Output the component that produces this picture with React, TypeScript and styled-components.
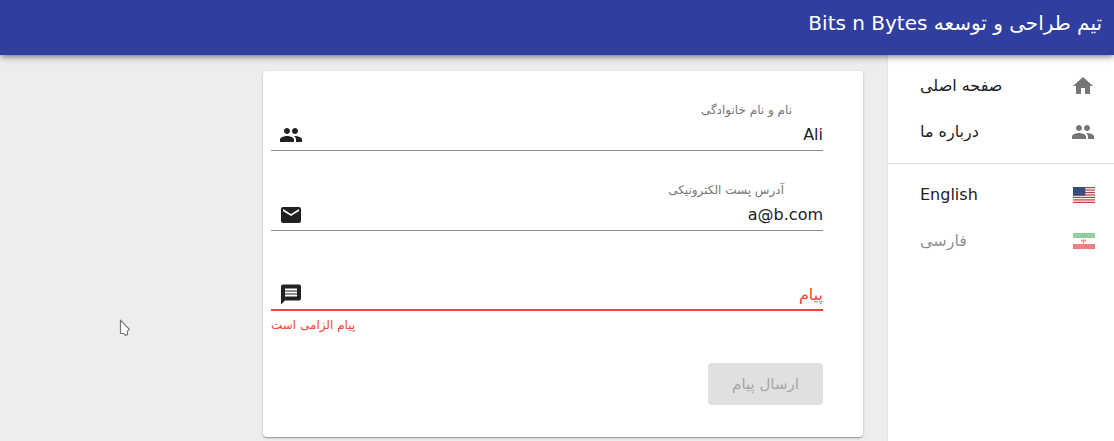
import React from 'react';
import styled, { createGlobalStyle } from 'styled-components';

const GlobalStyle = createGlobalStyle`
  * { box-sizing: border-box; }
  body {
    margin: 0;
    overflow: hidden;
    background: #ededed;
    color: #212121;
    font-family: "DejaVu Sans", sans-serif;
    font-size: 16px;
  }
`;

const Page = styled.div`
  direction: rtl;
  height: 441px;
  display: flex;
  flex-direction: column;
  overflow: hidden;
`;

const AppBar = styled.header`
  flex: none;
  height: 55px;
  padding: 11px 12px 0;
  background: #303f9f;
  color: #fff;
  z-index: 2;
  box-shadow: 0 2px 4px -1px rgba(0, 0, 0, 0.3), 0 4px 5px rgba(0, 0, 0, 0.14),
    0 1px 10px rgba(0, 0, 0, 0.12);
`;

const Title = styled.h1`
  margin: 0;
  font-size: 20px;
  font-weight: 400;
  line-height: 24px;
`;

const Body = styled.div`
  flex: 1;
  min-height: 0;
  display: flex;
`;

const Drawer = styled.nav`
  flex: none;
  width: 227px;
  padding-top: 8px;
  background: #fff;
  border-left: 1px solid #e6e6e6;
`;

const NavItem = styled.a<{ $disabled?: boolean }>`
  height: 46px;
  padding: 0 19px 0 32px;
  display: flex;
  align-items: center;
  justify-content: space-between;
  line-height: 24px;
  opacity: ${(p) => (p.$disabled ? 0.5 : 1)};
`;

const NavIcon = styled.span`
  width: 24px;
  height: 24px;
  display: flex;
  align-items: center;
  justify-content: flex-start;
  color: #757575;
`;

const Divider = styled.hr`
  height: 1px;
  margin: 8px 0;
  border: 0;
  background: #e0e0e0;
`;

const Main = styled.main`
  flex: 1;
  padding: 16px 24px 0 0;
`;

const Card = styled.form`
  width: 600px;
  height: 366px;
  padding: 24px 40px 0 8px;
  display: flex;
  flex-direction: column;
  background: #fff;
  border-radius: 4px;
  box-shadow: 0 1px 3px rgba(0, 0, 0, 0.2), 0 1px 1px rgba(0, 0, 0, 0.14),
    0 2px 1px -1px rgba(0, 0, 0, 0.12);
`;

const Field = styled.div`
  height: 80px;
`;

const Label = styled.label<{ $indent: number }>`
  display: block;
  height: 28px;
  padding-right: ${(p) => p.$indent}px;
  color: #757575;
  font-size: 12px;
  line-height: 31px;
`;

const InputRow = styled.div<{ $error?: boolean }>`
  height: 28px;
  padding-left: 8px;
  display: flex;
  align-items: flex-start;
  justify-content: space-between;
  border-bottom: ${(p) => (p.$error ? '2px solid #f44336' : '1px solid #8c8c8c')};
  color: ${(p) => (p.$error ? '#f44336' : '#212121')};
`;

const Value = styled.span`
  line-height: 24px;
`;

const FieldIcon = styled.span`
  width: 24px;
  height: 24px;
  color: #212121;
`;

const Helper = styled.p`
  margin: 0;
  padding-top: 4px;
  direction: ltr;
  color: #f44336;
  font-size: 12px;
  line-height: 20px;
`;

const Submit = styled.button`
  width: 115px;
  height: 42px;
  margin-top: 28px;
  padding: 0;
  border: 0;
  border-radius: 4px;
  background: #e0e0e0;
  color: #a6a6a6;
  font: inherit;
  font-size: 15px;
`;

const Cursor = styled.svg`
  position: absolute;
  left: 119px;
  top: 319px;
`;

const Glyph = styled.svg`
  display: block;
  width: 24px;
  height: 24px;
  fill: currentColor;
`;

const Flag = styled.svg`
  display: block;
  flex: none;
`;

const paths = {
  home: 'M10 20v-6h4v6h5v-8h3L12 3 2 12h3v8z',
  people:
    'M16 11c1.66 0 2.99-1.34 2.99-3S17.66 5 16 5c-1.66 0-3 1.34-3 3s1.34 3 3 3zm-8 0c1.66 0 2.99-1.34 2.99-3S9.66 5 8 5C6.34 5 5 6.34 5 8s1.34 3 3 3zm0 2c-2.33 0-7 1.17-7 3.5V19h14v-2.5c0-2.33-4.67-3.5-7-3.5zm8 0c-.29 0-.62.02-.97.05 1.16.84 1.97 1.97 1.97 3.45V19h6v-2.5c0-2.33-4.67-3.5-7-3.5z',
  mail: 'M20 4H4c-1.1 0-1.99.9-1.99 2L2 18c0 1.1.9 2 2 2h16c1.1 0 2-.9 2-2V6c0-1.1-.9-2-2-2zm0 4l-8 5-8-5V6l8 5 8-5v2z',
  message:
    'M20 2H4c-1.1 0-1.99.9-1.99 2L2 22l4-4h14c1.1 0 2-.9 2-2V4c0-1.1-.9-2-2-2zM6 9h12v2H6V9zm12 5H6v-2h12v2zm0-6H6V6h12v2z',
};

const Icon = ({ name }: { name: keyof typeof paths }) => (
  <Glyph viewBox={name === 'message' ? '0 0.5 24 24' : '0 0 24 24'}>
    <path d={paths[name]} />
  </Glyph>
);

const UsFlag = () => (
  <Flag width="22" height="16" viewBox="0 0 22 16">
    <path d="M0 0h22v16H0z" fill="#fff" />
    {[0, 1, 2, 3, 4, 5, 6].map((i) => (
      <rect key={i} y={i * 2.46} width="22" height="1.23" fill="#bd3d44" />
    ))}
    <path d="M0 0h12.3v8.6H0z" fill="#2f4a78" />
    {[1.5, 3.3, 5.1, 6.9].map((y) => (
      <path key={y} d={`M1 ${y}h11`} stroke="#8090ad" strokeWidth=".5" strokeDasharray=".6 1.4" />
    ))}
  </Flag>
);

const IranFlag = () => (
  <Flag width="22" height="16" viewBox="0 0 22 16">
    <path d="M0 0h22v16H0z" fill="#fff" />
    <path d="M0 0h22v5H0z" fill="#239f40" />
    <path d="M0 11h22v5H0z" fill="#da0000" />
    <path
      d="M10.5 5.7v4.8M8.7 6.6c-.7 1.6.4 2.5 1.6 2.9M12.3 6.6c.7 1.6-.4 2.5-1.6 2.9M8 7.5h5"
      fill="none"
      stroke="#da0000"
      strokeWidth=".8"
    />
  </Flag>
);

export default function App() {
  return (
    <Page>
      <GlobalStyle />
      <AppBar>
        <Title>تیم طراحی و توسعه Bits n Bytes</Title>
      </AppBar>
      <Body>
        <Drawer>
          <NavItem>
            <NavIcon><Icon name="home" /></NavIcon>
            <span>صفحه اصلی</span>
          </NavItem>
          <NavItem>
            <NavIcon><Icon name="people" /></NavIcon>
            <span>درباره ما</span>
          </NavItem>
          <Divider />
          <NavItem>
            <NavIcon><UsFlag /></NavIcon>
            <span>English</span>
          </NavItem>
          <NavItem $disabled>
            <NavIcon><IranFlag /></NavIcon>
            <span>فارسی</span>
          </NavItem>
        </Drawer>
        <Main>
          <Card>
            <Field>
              <Label $indent={31}>نام و نام خانوادگی</Label>
              <InputRow>
                <Value>Ali</Value>
                <FieldIcon><Icon name="people" /></FieldIcon>
              </InputRow>
            </Field>
            <Field>
              <Label $indent={39}>آدرس پست الکترونیکی</Label>
              <InputRow>
                <Value>a@b.com</Value>
                <FieldIcon><Icon name="mail" /></FieldIcon>
              </InputRow>
            </Field>
            <Field>
              <Label $indent={0} />
              <InputRow $error>
                <Value>پیام</Value>
                <FieldIcon><Icon name="message" /></FieldIcon>
              </InputRow>
              <Helper>پیام الزامی است</Helper>
            </Field>
            <Submit type="button" disabled>ارسال پیام</Submit>
          </Card>
        </Main>
      </Body>
      <Cursor width="12" height="18" viewBox="0 0 12 18">
        <path
          d="M1.5 1.2v13.3h3.1l2.2 2 1.7-1-.2-3 1.9-2.4z"
          fill="#fff"
          stroke="#757575"
          strokeWidth="1.2"
          strokeLinejoin="round"
        />
      </Cursor>
    </Page>
  );
}
